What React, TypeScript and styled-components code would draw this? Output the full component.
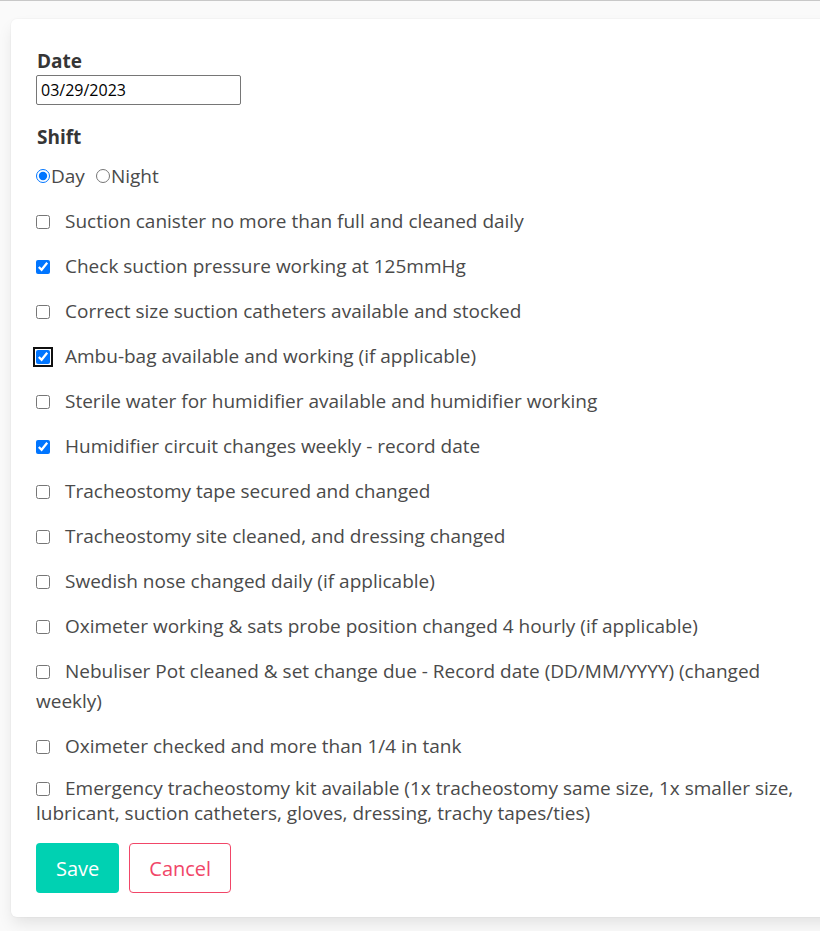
import React, { useState } from "react";
import styled, { createGlobalStyle } from "styled-components";

const GlobalStyle = createGlobalStyle`
  html, body {
    margin: 0;
    padding: 0;
    background: #fafafa;
    overflow-x: hidden;
  }
  body {
    font-family: "Open Sans", "Noto Sans", sans-serif;
    color: #4a4a4a;
  }
`;

const Page = styled.div`
  border-top: 1px solid #c8c8c8;
  padding: 18px 0 14px 11px;
`;

const Card = styled.form`
  width: 840px;
  box-sizing: border-box;
  background: #fff;
  border-radius: 6px;
  box-shadow: 0 8px 16px -2px rgba(10, 10, 10, 0.1), 0 0 0 1px rgba(10, 10, 10, 0.02);
  padding: 28px 25px 24px 25px;
`;

const FieldLabel = styled.div<{ $top?: number }>`
  font-size: 19px;
  font-weight: 700;
  color: #363636;
  line-height: 28px;
  margin-top: ${(p) => p.$top ?? 0}px;
  padding-left: 1px;
`;

const DateInput = styled.input`
  display: block;
  box-sizing: border-box;
  width: 205px;
  height: 30px;
  margin: 0;
  padding: 0 4px;
  font-family: "Open Sans", sans-serif;
  font-size: 16px;
  color: #000;
  border: 1px solid #767676;
  border-radius: 2px;
  outline: none;
`;

const RadioRow = styled.div`
  display: flex;
  align-items: center;
  margin-top: 10px;
  margin-bottom: 15px;
  font-size: 19px;
  line-height: 30px;
`;

const RadioLabel = styled.label`
  display: inline-flex;
  align-items: center;
  & + & {
    margin-left: 11px;
  }
`;

const Radio = styled.input`
  width: 14px;
  height: 14px;
  margin: 0 1px 0 0;
  accent-color: #0075ff;
`;

const Item = styled.label<{ $lh: number }>`
  display: block;
  font-size: 19px;
  line-height: ${(p) => p.$lh}px;
  margin-bottom: 15px;
`;

const Check = styled.input<{ $focused?: boolean }>`
  width: 14px;
  height: 14px;
  margin: 0 15px 0 0;
  vertical-align: -1px;
  accent-color: #0075ff;
  ${(p) =>
    p.$focused &&
    `outline: 2px solid #101010; outline-offset: 1px; border-radius: 2px;`}
`;

const Buttons = styled.div`
  display: flex;
  gap: 10px;
  margin-top: 17px;
`;

const Button = styled.button<{ $variant: "primary" | "danger" }>`
  height: 50px;
  box-sizing: border-box;
  padding: 0 19px;
  border-radius: 4px;
  font-family: "Open Sans", sans-serif;
  font-size: 20px;
  cursor: pointer;
  background: ${(p) => (p.$variant === "primary" ? "#00d1b2" : "#fff")};
  color: ${(p) => (p.$variant === "primary" ? "#fff" : "#f14668")};
  border: 1px solid ${(p) => (p.$variant === "primary" ? "transparent" : "#f14668")};
`;

const items: { text: string; checked?: boolean; focused?: boolean; lh?: number }[] = [
  { text: "Suction canister no more than full and cleaned daily" },
  { text: "Check suction pressure working at 125mmHg", checked: true },
  { text: "Correct size suction catheters available and stocked" },
  { text: "Ambu-bag available and working (if applicable)", checked: true, focused: true },
  { text: "Sterile water for humidifier available and humidifier working" },
  { text: "Humidifier circuit changes weekly - record date", checked: true },
  { text: "Tracheostomy tape secured and changed" },
  { text: "Tracheostomy site cleaned, and dressing changed" },
  { text: "Swedish nose changed daily (if applicable)" },
  { text: "Oximeter working & sats probe position changed 4 hourly (if applicable)" },
  { text: "Nebuliser Pot cleaned & set change due - Record date (DD/MM/YYYY) (changed weekly)" },
  { text: "Oximeter checked and more than 1/4 in tank" },
  {
    text: "Emergency tracheostomy kit available (1x tracheostomy same size, 1x smaller size, lubricant, suction catheters, gloves, dressing, trachy tapes/ties)",
    lh: 25,
  },
];

export default function App() {
  const [shift, setShift] = useState("day");
  const [checks, setChecks] = useState(items.map((i) => !!i.checked));

  return (
    <Page>
      <GlobalStyle />
      <Card onSubmit={(e) => e.preventDefault()}>
        <FieldLabel>Date</FieldLabel>
        <DateInput type="text" defaultValue="03/29/2023" />
        <FieldLabel $top={18}>Shift</FieldLabel>
        <RadioRow>
          <RadioLabel>
            <Radio type="radio" name="shift" checked={shift === "day"} onChange={() => setShift("day")} />
            Day
          </RadioLabel>
          <RadioLabel>
            <Radio type="radio" name="shift" checked={shift === "night"} onChange={() => setShift("night")} />
            Night
          </RadioLabel>
        </RadioRow>
        {items.map((item, i) => (
          <Item key={i} $lh={item.lh ?? 30}>
            <Check
              type="checkbox"
              $focused={item.focused}
              checked={checks[i]}
              onChange={() => setChecks(checks.map((c, j) => (j === i ? !c : c)))}
            />
            {item.text}
          </Item>
        ))}
        <Buttons>
          <Button type="submit" $variant="primary">Save</Button>
          <Button type="button" $variant="danger">Cancel</Button>
        </Buttons>
      </Card>
    </Page>
  );
}
